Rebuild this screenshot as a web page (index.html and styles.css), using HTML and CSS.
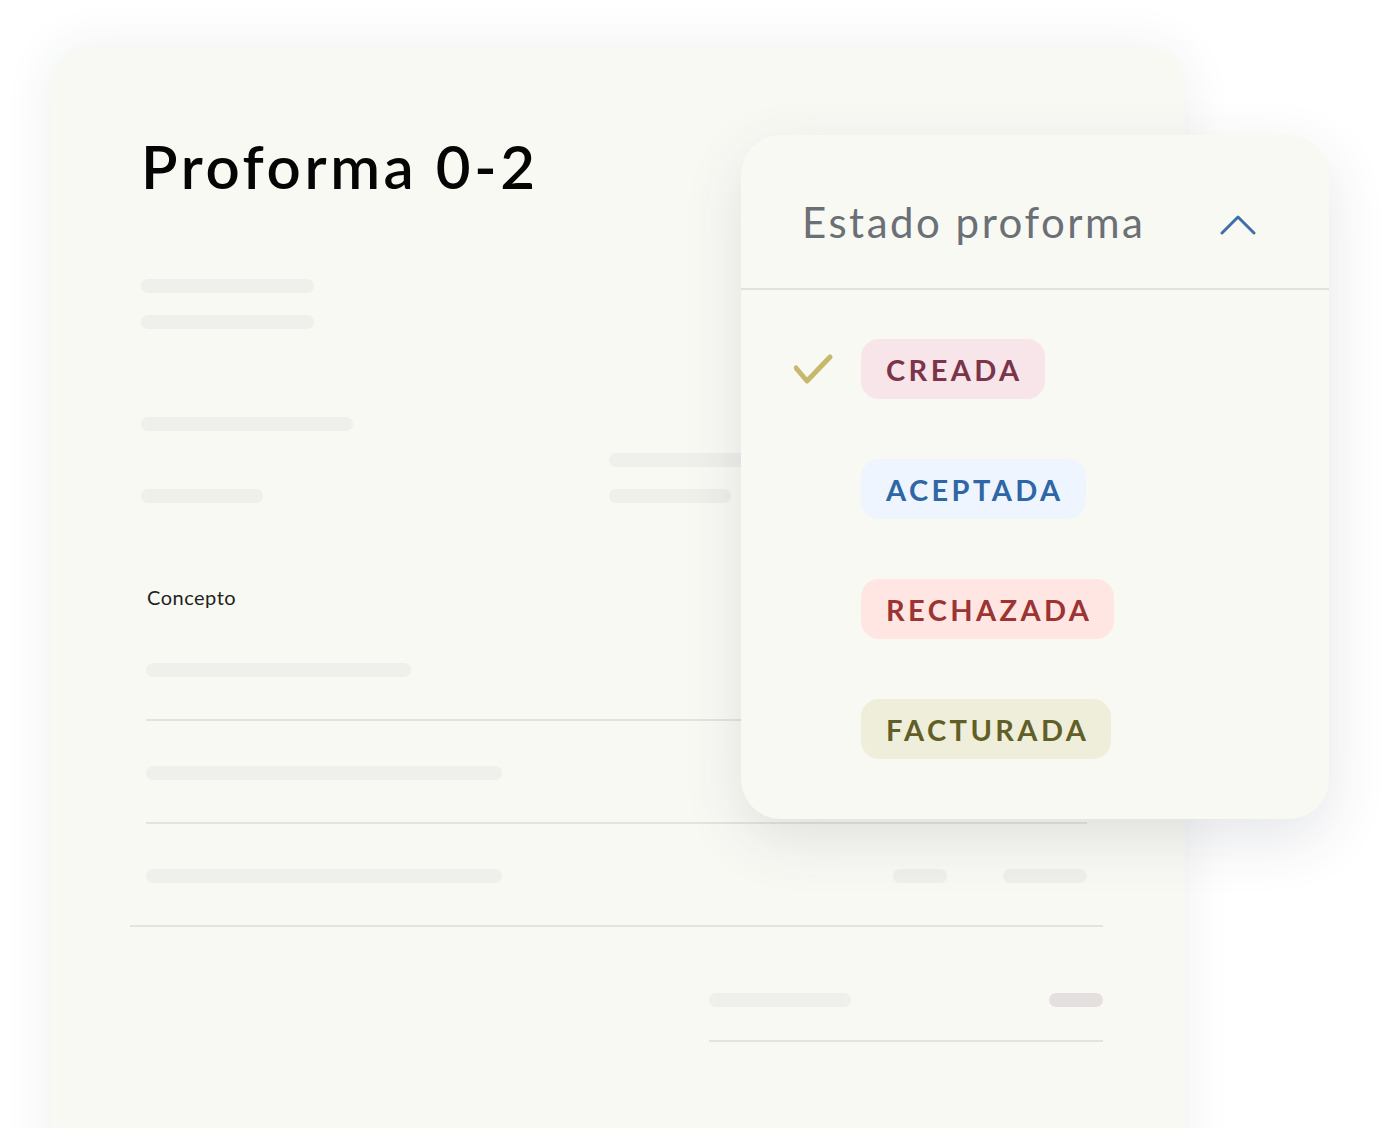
FILE: index.html
```html
<!DOCTYPE html>
<html lang="es">
<head>
  <meta charset="UTF-8">
  <title>Proforma 0-2</title>
  <link rel="stylesheet" href="styles.css">
</head>
<body>
  <div class="card">
    <h1 class="title">Proforma 0-2</h1>

    <div class="meta">
      <span class="bar w173"></span>
      <span class="bar w173"></span>
    </div>

    <div class="parties">
      <div class="party">
        <span class="bar w212"></span>
        <span class="bar w122"></span>
      </div>
      <div class="party party--right">
        <span class="bar w160"></span>
        <span class="bar w122"></span>
      </div>
    </div>

    <div class="lines">
      <div class="lines-head">Concepto</div>
      <div class="line">
        <span class="bar w265"></span>
      </div>
      <div class="line">
        <span class="bar w356"></span>
      </div>
      <div class="line">
        <span class="bar w356"></span>
        <div class="line-amounts">
          <span class="bar w54"></span>
          <span class="bar w84"></span>
        </div>
      </div>
    </div>

    <div class="totals">
      <span class="bar w142"></span>
      <span class="bar bar--dark w54"></span>
    </div>

    <div class="status-menu">
      <div class="status-head">
        <span class="status-label">Estado proforma</span>
        <svg class="chevron" width="36" height="20" viewBox="0 0 36 20">
          <polyline points="2,18 18,2 34,18" fill="none" stroke="#3f6ea8" stroke-width="3" stroke-linecap="round" stroke-linejoin="round"/>
        </svg>
      </div>
      <ul class="status-list">
        <li class="status-item">
          <svg class="check" width="40" height="32" viewBox="0 0 40 32">
            <polyline points="2,15 13,28 36,4" fill="none" stroke="#c6b96b" stroke-width="5" stroke-linecap="round" stroke-linejoin="round"/>
          </svg>
          <span class="chip chip--created">CREADA</span>
        </li>
        <li class="status-item">
          <span class="chip chip--accepted">ACEPTADA</span>
        </li>
        <li class="status-item">
          <span class="chip chip--rejected">RECHAZADA</span>
        </li>
        <li class="status-item">
          <span class="chip chip--billed">FACTURADA</span>
        </li>
      </ul>
    </div>
  </div>
</body>
</html>
```

FILE: styles.css
```css
body {
  margin: 0;
  background: #fff;
  font-family: "Lato", "Noto Sans", sans-serif;
  overflow: hidden;
  height: 1128px;
}
.card {
  position: relative;
  margin: 47px 0 0 50px;
  width: 1135px;
  height: 1200px;
  box-sizing: border-box;
  padding-top: 83px;
  background: #f9f9f4;
  border-radius: 40px;
  box-shadow: 0 0 50px rgba(40, 50, 70, 0.08);
}
.title {
  margin: 0 0 0 91px;
  font-size: 60px;
  line-height: 72px;
  font-weight: 600;
  letter-spacing: 3.6px;
  color: #050505;
}

/* placeholder bars */
.bar {
  display: block;
  height: 14px;
  border-radius: 7px;
  background: #efefeb;
}
.bar--dark { background: #e4e0df; }
.w54 { width: 54px; }
.w84 { width: 84px; }
.w122 { width: 122px; }
.w142 { width: 142px; }
.w160 { width: 160px; }
.w173 { width: 173px; }
.w212 { width: 212px; }
.w265 { width: 265px; }
.w356 { width: 356px; }

.meta {
  display: flex;
  flex-direction: column;
  gap: 22px;
  margin: 77px 0 0 91px;
}
.parties {
  display: grid;
  grid-template-columns: 468px auto;
  align-items: end;
  margin: 88px 0 0 91px;
}
.party {
  display: flex;
  flex-direction: column;
  gap: 58px;
}
.party--right { gap: 22px; }

/* concept lines */
.lines {
  margin: 82px 82px 0 80px;
  border-bottom: 2px solid #e6e2e0;
}
.lines-head {
  padding: 0 16px 9px 17px;
  font-size: 20px;
  line-height: 24px;
  letter-spacing: 0.5px;
  color: #222;
}
.line {
  display: flex;
  align-items: center;
  margin: 0 16px;
  padding: 45px 0 42px;
  border-bottom: 2px solid #e6e2e0;
}
.line:last-child { border-bottom: none; }
.line-amounts {
  display: flex;
  gap: 56px;
  margin-left: auto;
}
.totals {
  display: flex;
  justify-content: space-between;
  width: 394px;
  margin: 0 82px 0 auto;
  padding: 66px 0 33px;
  border-bottom: 2px solid #e6e2e0;
}

/* status dropdown */
.status-menu {
  position: absolute;
  top: 88px;
  left: 691px;
  width: 588px;
  background: #f9f9f4;
  border-radius: 40px;
  box-shadow: 0 20px 60px rgba(40, 50, 70, 0.12);
}
.status-head {
  display: flex;
  align-items: center;
  justify-content: space-between;
  height: 155px;
  box-sizing: border-box;
  padding: 20px 73px 0 61px;
  border-bottom: 2px solid #e4e0df;
}
.status-label {
  font-size: 42px;
  letter-spacing: 2.5px;
  color: #6b6f76;
}
.chevron { margin-top: 6px; }
.status-list {
  list-style: none;
  margin: 0;
  padding: 49px 0 60px 53px;
  display: flex;
  flex-direction: column;
  gap: 60px;
}
.status-item {
  display: flex;
  align-items: center;
  gap: 27px;
  padding-left: 67px;
  height: 60px;
}
.status-item:first-child { padding-left: 0; }
.chip {
  display: inline-flex;
  align-items: center;
  height: 60px;
  padding: 0 22px 0 25px;
  border-radius: 18px;
  font-size: 29px;
  font-weight: 700;
  letter-spacing: 3.4px;
}
.chip--created { background: #f7e5e9; color: #7b3449; }
.chip--accepted { background: #eef5fe; color: #2f66a6; }
.chip--rejected { background: #ffe6e3; color: #9b3432; }
.chip--billed { background: #efeedb; color: #625e27; }
```
